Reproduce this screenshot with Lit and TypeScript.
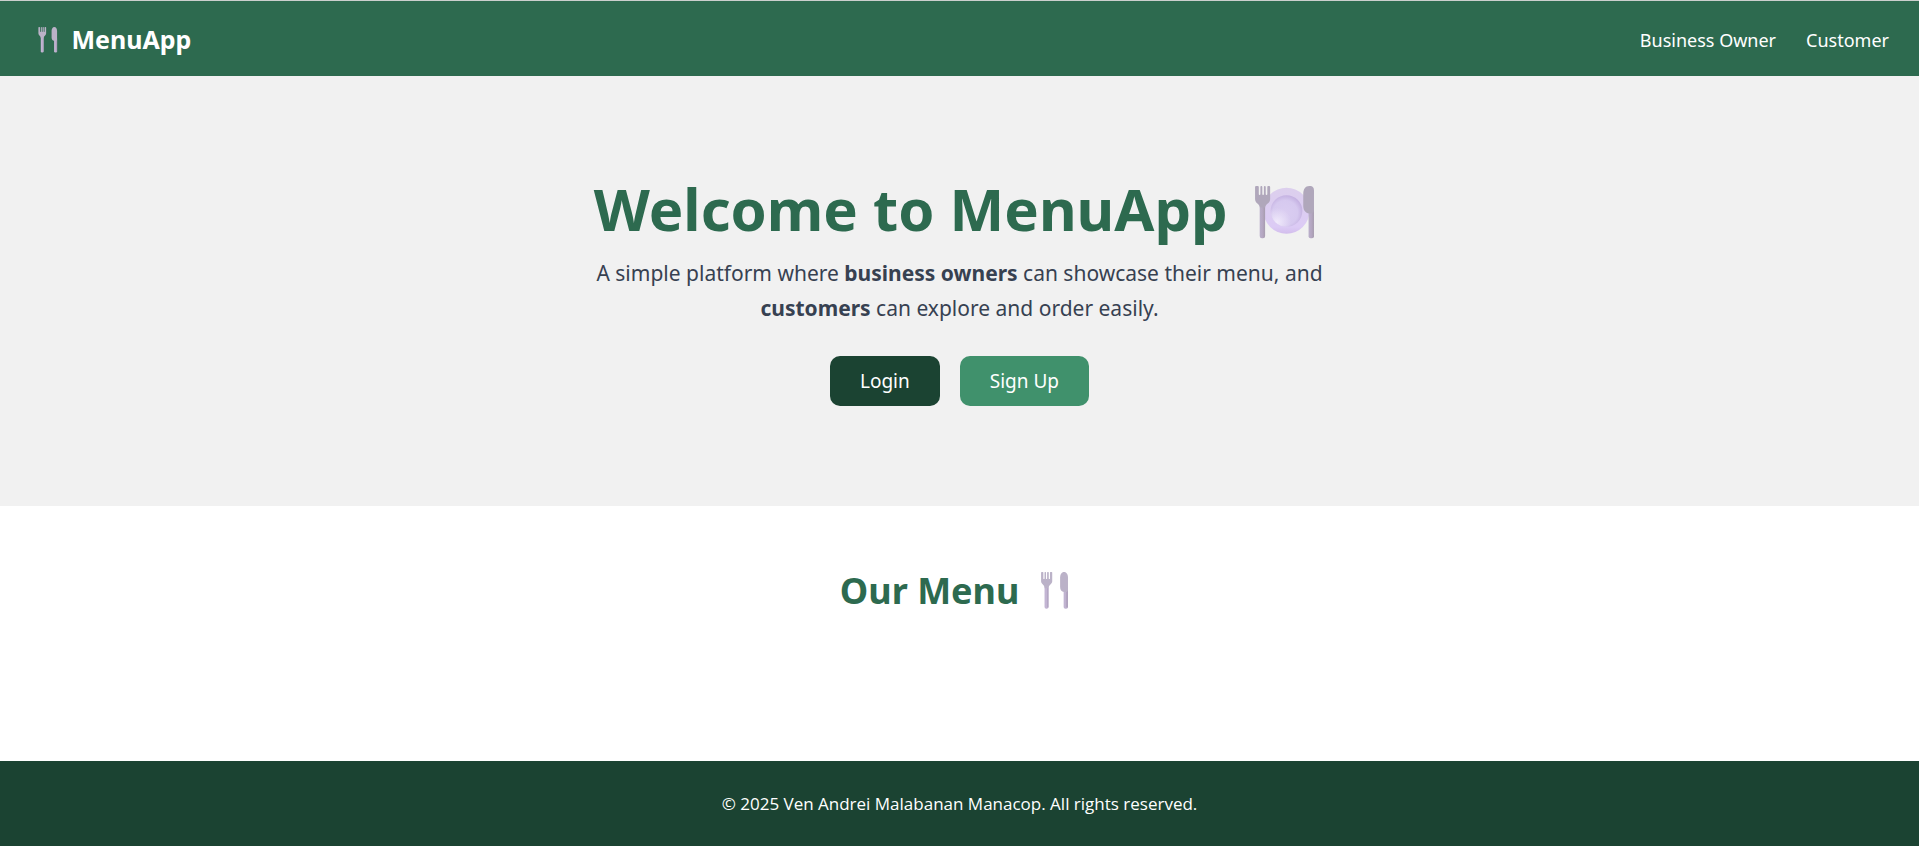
import { LitElement, html, css } from 'lit';
import { customElement } from 'lit/decorators.js';

@customElement('cutlery-icon')
class CutleryIcon extends LitElement {
  static styles = css`
    :host {
      display: inline-block;
      vertical-align: -0.15em;
      line-height: 0;
    }
    .icon {
      width: 1.4em;
      height: 1.04em;
      overflow: visible;
    }
  `;

  render() {
    return html`
      <svg class="icon" viewBox="1.5 0 51 38" aria-hidden="true">
        <rect x="17.2" y="12" width="4" height="25.3" rx="1.8" fill="#c3b5d3" />
        <rect x="19.8" y="16" width="1.4" height="20" fill="#b3a6c2" />
        <path
          d="M13.7 .6Q13.7 0 14.4 0H15.4Q16 0 16 .6V6.6Q16 7.2 16.6 7.2T17.2 6.6V.6Q17.2 0 17.8 0H18.2Q18.7 0 18.7 .6V6.6Q18.7 7.2 19.2 7.2T19.8 6.6V.6Q19.8 0 20.4 0H20.9Q21.5 0 21.5 .6V6.6Q21.5 7.2 22.1 7.2T22.7 6.6V.6Q22.7 0 23.3 0H24.3Q25 0 25 .6V9.5C25 12.5 21.4 13.2 21.2 16.4H17.4C17.3 13.2 13.7 12.5 13.7 9.5Z"
          fill="#bbb2c8"
        />
        <rect x="36.6" y="15" width="4.4" height="22.3" rx="1.8" fill="#c0b3d0" />
        <rect x="39.2" y="18" width="1.8" height="18" fill="#afa2bd" />
        <path
          d="M33 6C33 2.4 34.4 0 37 0S41 2.4 41 6V18C41 19.6 40 20.3 38.6 20.3H37C34.4 20.3 33 18.2 33 15Z"
          fill="#bbb2c8"
        />
      </svg>
    `;
  }
}

@customElement('plate-icon')
class PlateIcon extends LitElement {
  static styles = css`
    :host {
      display: inline-block;
      vertical-align: -0.13em;
      line-height: 0;
    }
    .icon {
      width: 1.42em;
      height: 0.9em;
      overflow: visible;
    }
  `;

  render() {
    return html`
      <svg class="icon" viewBox="0 0 82 52" aria-hidden="true">
        <defs>
          <linearGradient id="rim" x1="0" y1="0" x2="0" y2="1">
            <stop offset="0" stop-color="#dccfed" />
            <stop offset=".85" stop-color="#dccbf5" />
            <stop offset="1" stop-color="#d2bdec" />
          </linearGradient>
          <radialGradient id="well" cx=".46" cy=".56" r=".56">
            <stop offset="0" stop-color="#dacdf1" />
            <stop offset=".7" stop-color="#d6c9ef" />
            <stop offset="1" stop-color="#c4b1e1" />
          </radialGradient>
          <radialGradient id="shine" cx=".2" cy=".85" r=".45">
            <stop offset="0" stop-color="#f0eafb" />
            <stop offset="1" stop-color="#f0eafb" stop-opacity="0" />
          </radialGradient>
          <linearGradient id="steel">
            <stop offset="0" stop-color="#b9aeca" />
            <stop offset=".5" stop-color="#b5a7c2" />
            <stop offset="1" stop-color="#a79caf" />
          </linearGradient>
        </defs>
        <circle cx="43.3" cy="24.7" r="23" fill="url(#rim)" />
        <circle cx="43.3" cy="24.9" r="15.8" fill="url(#well)" />
        <circle cx="43.3" cy="24.9" r="15.8" fill="url(#shine)" />
        <rect x="16.6" y="16" width="5.4" height="36" rx="2.2" fill="url(#steel)" />
        <path
          d="M12 1Q12 0 13 0H14.8Q15.7 0 15.7 1V8Q15.7 9 16.5 9T17.3 8V1Q17.3 0 18.1 0H18.4Q19.2 0 19.2 1V8Q19.2 9 20 9T20.8 8V1Q20.8 0 21.6 0H21.8Q22.6 0 22.6 1V8Q22.6 9 23.4 9T24.2 8V1Q24.2 0 25 0H26Q27 0 27 1V13C27 17.5 22.4 17.6 22 21.5H16.8C16.6 17.6 12 17.5 12 13Z"
          fill="#b0a7bb"
        />
        <rect x="65.3" y="20" width="5.4" height="32" rx="2" fill="url(#steel)" />
        <path
          d="M60 8C60 3 62 0 66 0S70.7 2 70.7 5V24C70.7 26.2 69.4 27.3 67.4 27.3H66C62 27.3 60 24 60 19.5Z"
          fill="#b0a7bb"
        />
      </svg>
    `;
  }
}

@customElement('app-root')
class AppRoot extends LitElement {
  static styles = css`
    :host {
      display: block;
      font-family: 'Noto Sans', 'Open Sans', sans-serif;
      color: #374151;
      background: #ffffff;
    }
    .header {
      display: flex;
      justify-content: space-between;
      align-items: center;
      padding: 21px 30px 19px;
      border-top: 1px solid #cbcfcd;
      background: #2d6a4f;
      color: #ffffff;
    }
    .logo {
      font-size: 25px;
      line-height: 35px;
      font-weight: 700;
    }
    .nav {
      display: flex;
      gap: 30px;
    }
    .link {
      color: #ffffff;
      font-size: 18px;
      line-height: 30px;
      text-decoration: none;
    }
    .hero {
      padding: 100px 20px;
      background: #f1f1f1;
      text-align: center;
    }
    .title {
      margin: 0 0 15px;
      color: #2d6a4f;
      font-size: 58px;
      line-height: 65px;
      font-weight: 700;
    }
    .intro {
      max-width: 750px;
      margin: 0 auto 30px;
      font-size: 21px;
      line-height: 35px;
    }
    .strong {
      font-weight: 700;
    }
    .actions {
      display: flex;
      justify-content: center;
      gap: 20px;
    }
    .button {
      padding: 10px 30px;
      border: 0;
      border-radius: 10px;
      color: #ffffff;
      font-family: inherit;
      font-size: 19px;
      line-height: 30px;
      cursor: pointer;
    }
    .login {
      background: #1b4332;
    }
    .signup {
      background: #40916c;
    }
    .menu {
      padding: 60px 30px;
      text-align: center;
    }
    .subtitle {
      margin: 0 0 25px;
      color: #2d6a4f;
      font-size: 36px;
      line-height: 50px;
      font-weight: 700;
    }
    .items {
      display: grid;
      min-height: 60px;
    }
    .footer {
      padding: 30px;
      background: #1b4332;
      color: #ffffff;
      font-family: 'Open Sans', 'Noto Sans', sans-serif;
      font-size: 17px;
      line-height: 25px;
      text-align: center;
    }
    .copyright {
      margin: 0;
    }
  `;

  render() {
    return html`
      <header class="header">
        <div class="logo"><cutlery-icon></cutlery-icon> MenuApp</div>
        <nav class="nav">
          <a class="link" href="#owner">Business Owner</a>
          <a class="link" href="#customer">Customer</a>
        </nav>
      </header>
      <main>
        <section class="hero">
          <h1 class="title">Welcome to MenuApp <plate-icon></plate-icon></h1>
          <p class="intro">
            A simple platform where <strong class="strong">business owners</strong> can showcase
            their menu, and <strong class="strong">customers</strong> can explore and order easily.
          </p>
          <div class="actions">
            <button class="button login" type="button">Login</button>
            <button class="button signup" type="button">Sign Up</button>
          </div>
        </section>
        <section class="menu">
          <h2 class="subtitle">Our Menu <cutlery-icon></cutlery-icon></h2>
          <div class="items"></div>
        </section>
      </main>
      <footer class="footer">
        <p class="copyright">© 2025 Ven Andrei Malabanan Manacop. All rights reserved.</p>
      </footer>
    `;
  }
}
